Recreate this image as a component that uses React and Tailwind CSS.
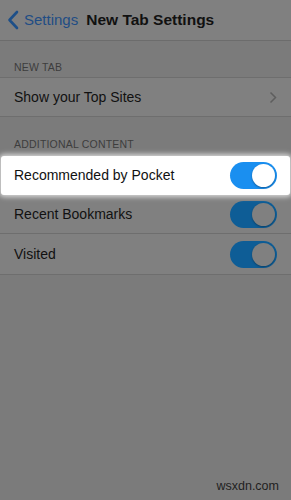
import React from "react";

function Toggle({ bright }) {
  return (
    <div
      className={`relative h-[27px] w-[47px] rounded-full ${bright ? "bg-[#1a8ff0]" : "bg-[#0e5d96]"}`}
    >
      <div
        className={`absolute right-[2px] top-[2px] h-[23px] w-[23px] rounded-full ${bright ? "bg-white shadow-[0_1px_2px_rgba(0,0,0,0.35)]" : "bg-[#808080] shadow-[0_1px_2px_rgba(0,0,0,0.3)]"}`}
      />
    </div>
  );
}

export default function App() {
  return (
    <div
      className="relative h-[500px] w-[291px] overflow-hidden bg-[#7b7b7b] text-[#111]"
      style={{ fontFamily: '"Liberation Sans", Arial, sans-serif' }}
    >
      <div className="flex h-[41px] items-center border-b border-[#6c6c6c] bg-[#808080]">
        <svg width="12" height="20" viewBox="0 0 12 20" className="ml-[7px]">
          <path d="M10 2 L2.5 10 L10 18" fill="none" stroke="#1d4f88" strokeWidth="2.6" strokeLinecap="round" strokeLinejoin="round" />
        </svg>
        <span className="ml-[5px] text-[15px] text-[#1f4d85]">Settings</span>
        <span className="ml-[8px] text-[15.5px] font-semibold text-[#111]">New Tab Settings</span>
      </div>

      <div className="h-[36px] pt-[19px] pl-[14px] text-[10.5px] text-[#3d3d3d] tracking-[0.2px]">NEW TAB</div>
      <div className="flex h-[40px] items-center border-y border-[#6e6e6e] bg-[#808080] pl-[14px] pr-[14px]">
        <span className="flex-1 text-[14px]">Show your Top Sites</span>
        <svg width="8" height="13" viewBox="0 0 8 13">
          <path d="M1.5 1.5 L6.5 6.5 L1.5 11.5" fill="none" stroke="#5e5e5e" strokeWidth="1.5" />
        </svg>
      </div>

      <div className="h-[39px] pt-[20px] pl-[14px] text-[10.5px] text-[#3d3d3d] tracking-[0.2px]">ADDITIONAL CONTENT</div>
      <div className="relative z-10 mx-[1px] flex h-[39px] items-center rounded-[3px] bg-white pl-[13px] pr-[13px] shadow-[0_0_5px_2px_rgba(255,255,255,0.7)]">
        <span className="flex-1 text-[14px] text-[#111]">Recommended by Pocket</span>
        <Toggle bright />
      </div>
      <div className="bg-[#808080]">
        <div className="flex h-[39px] items-center border-b border-[#6e6e6e] pl-[14px] pr-[14px]">
          <span className="flex-1 text-[14px]">Recent Bookmarks</span>
          <Toggle />
        </div>
        <div className="flex h-[41px] items-center border-b border-[#6e6e6e] pl-[14px] pr-[14px]">
          <span className="flex-1 text-[14px]">Visited</span>
          <Toggle />
        </div>
      </div>

      <div className="absolute bottom-[4px] right-[12px] text-[12.5px] text-[#1f1f1f]" style={{ fontFamily: '"Liberation Sans", Arial, sans-serif' }}>
        wsxdn.com
      </div>
    </div>
  );
}
